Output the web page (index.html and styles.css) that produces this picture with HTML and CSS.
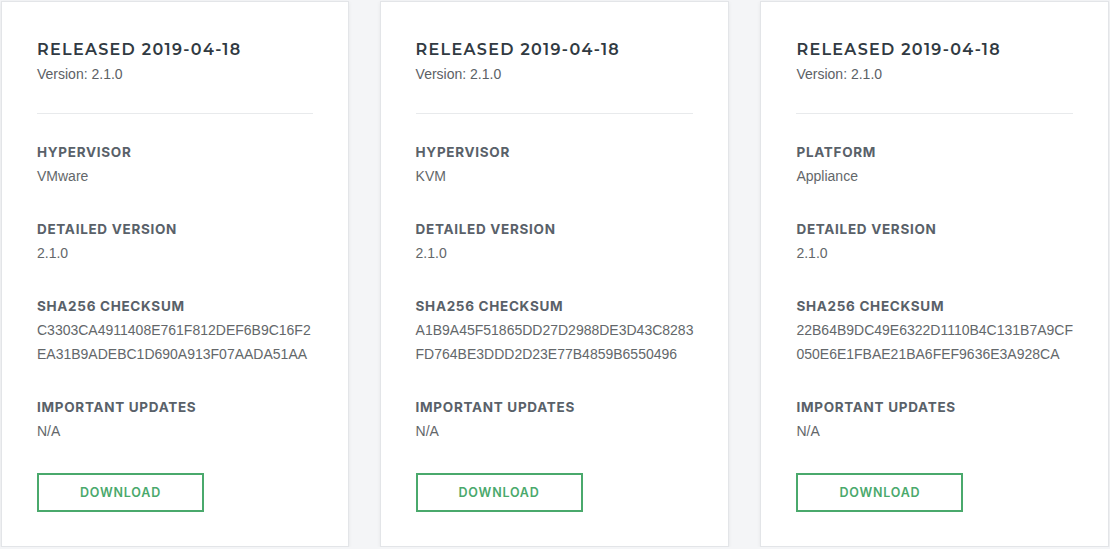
FILE: index.html
```html
<!DOCTYPE html>
<html>
<head>
<meta charset="utf-8">
<link rel="stylesheet" href="styles.css">
</head>
<body>
<div class="grid">
  <div class="card">
    <h2 class="title">RELEASED 2019-04-18</h2>
    <div class="version">Version: 2.1.0</div>
    <hr class="rule">
    <div class="field"><div class="label">HYPERVISOR</div><div class="value">VMware</div></div>
    <div class="field"><div class="label">DETAILED VERSION</div><div class="value">2.1.0</div></div>
    <div class="field"><div class="label">SHA256 CHECKSUM</div><div class="value">C3303CA4911408E761F812DEF6B9C16F2<br>EA31B9ADEBC1D690A913F07AADA51AA</div></div>
    <div class="field"><div class="label">IMPORTANT UPDATES</div><div class="value">N/A</div></div>
    <button class="btn">DOWNLOAD</button>
  </div>
  <div class="card">
    <h2 class="title">RELEASED 2019-04-18</h2>
    <div class="version">Version: 2.1.0</div>
    <hr class="rule">
    <div class="field"><div class="label">HYPERVISOR</div><div class="value">KVM</div></div>
    <div class="field"><div class="label">DETAILED VERSION</div><div class="value">2.1.0</div></div>
    <div class="field"><div class="label">SHA256 CHECKSUM</div><div class="value">A1B9A45F51865DD27D2988DE3D43C8283<br>FD764BE3DDD2D23E77B4859B6550496</div></div>
    <div class="field"><div class="label">IMPORTANT UPDATES</div><div class="value">N/A</div></div>
    <button class="btn">DOWNLOAD</button>
  </div>
  <div class="card">
    <h2 class="title">RELEASED 2019-04-18</h2>
    <div class="version">Version: 2.1.0</div>
    <hr class="rule">
    <div class="field"><div class="label">PLATFORM</div><div class="value">Appliance</div></div>
    <div class="field"><div class="label">DETAILED VERSION</div><div class="value">2.1.0</div></div>
    <div class="field"><div class="label">SHA256 CHECKSUM</div><div class="value">22B64B9DC49E6322D1110B4C131B7A9CF<br>050E6E1FBAE21BA6FEF9636E3A928CA</div></div>
    <div class="field"><div class="label">IMPORTANT UPDATES</div><div class="value">N/A</div></div>
    <button class="btn">DOWNLOAD</button>
  </div>
</div>
</body>
</html>
```
FILE: styles.css
```css
html, body {
  margin: 0;
  padding: 0;
  background: #f4f5f7;
}
body {
  font-family: "Liberation Sans", Arial, sans-serif;
}
.grid {
  display: grid;
  grid-template-columns: repeat(3, 1fr);
  gap: 31px;
  padding: 1px 1px 0 1px;
}
.card {
  background: #fff;
  border: 1px solid #e3e5e8;
  box-shadow: 0 1px 4px rgba(0,0,0,0.06);
  height: 546px;
  box-sizing: border-box;
  padding: 36px 35px 0 35px;
}
.title {
  margin: 0;
  font-family: "Montserrat", "Inter", sans-serif;
  font-size: 16px;
  font-weight: 600;
  letter-spacing: 1.3px;
  color: #313a42;
  line-height: 24px;
}
.version {
  font-size: 14px;
  color: #5c6166;
  line-height: 24px;
  margin-top: 0;
}
.rule {
  border: 0;
  border-top: 1px solid #e8eaec;
  margin: 27px 0 0 0;
  height: 0;
}
.field {
  margin-top: 26px;
}
.field + .field {
  margin-top: 29px;
}
.label {
  font-family: "Inter", sans-serif;
  font-weight: 700;
  font-size: 13.5px;
  letter-spacing: 0.7px;
  color: #596169;
  line-height: 24px;
}
.value {
  font-size: 14px;
  color: #63676a;
  line-height: 24px;
}
.btn {
  display: block;
  margin-top: 30px;
  width: 167px;
  height: 39px;
  background: #fff;
  border: 2px solid #4aa96c;
  color: #4aa96c;
  font-family: "Inter", sans-serif;
  font-weight: 600;
  font-size: 12.5px;
  letter-spacing: 0.8px;
  padding: 0;
  cursor: pointer;
}
```
